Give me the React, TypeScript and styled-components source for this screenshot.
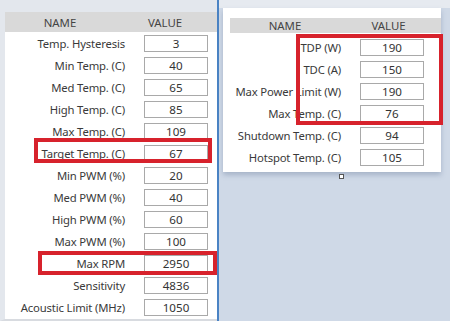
import React from 'react';
import styled, { createGlobalStyle } from 'styled-components';

const GlobalStyle = createGlobalStyle`
  html, body {
    margin: 0;
    padding: 0;
    background: #cfd9e7;
  }
  body {
    font-family: "Noto Sans", "Open Sans", sans-serif;
    color: #333;
  }
`;

const Screen = styled.div`
  position: relative;
  width: 450px;
  height: 321px;
  display: flex;
  overflow: hidden;
  background: #cfd9e7;
`;

const LeftPane = styled.div`
  width: 217px;
  flex-shrink: 0;
  background: #fff;
  border-left: 5px solid #e3e7ed;
  border-top: 12px solid #e3e7ed;
  border-bottom: 2px solid #d8dbe0;
  box-sizing: border-box;
  height: 321px;
  display: flex;
  flex-direction: column;
`;

const Divider = styled.div`
  width: 2px;
  flex-shrink: 0;
  background: #4a83c4;
`;

const RightPane = styled.div`
  flex: 1;
  border-top: 8px solid #e6eaf0;
  padding-left: 4px;
`;

const Card = styled.div`
  width: 218px;
  height: 164px;
  background: #fff;
  box-sizing: border-box;
  padding: 10px 0 0 7px;
  box-shadow: 0 3px 5px rgba(90, 110, 140, 0.35);
`;

const Header = styled.div<{ $nameWidth: number; $valueWidth: number; $height: number }>`
  display: grid;
  grid-template-columns: ${p => p.$nameWidth}px ${p => p.$valueWidth}px;
  height: ${p => p.$height}px;
  align-items: center;
  background: #d9d9d9;
  font-size: 11.4px;
  color: #444;
  text-align: center;
`;

const Rows = styled.div<{ $offset: number }>`
  display: flex;
  flex-direction: column;
  padding-top: ${p => p.$offset}px;
`;

const Row = styled.div<{ $labelWidth: number }>`
  display: grid;
  grid-template-columns: ${p => p.$labelWidth}px 64px;
  column-gap: 19px;
  height: 22px;
  align-items: center;
  font-size: 11.3px;
`;

const Label = styled.span`
  text-align: right;
  white-space: nowrap;
  letter-spacing: -0.15px;
  color: #3a3a3a;
`;

const ValueBox = styled.div`
  height: 17px;
  box-sizing: border-box;
  border: 1px solid #a9a9a9;
  background: #fff;
  text-align: center;
  line-height: 15px;
  font-size: 11.6px;
  color: #333;
`;

const Highlight = styled.div<{ $x: number; $y: number; $w: number; $h: number }>`
  position: absolute;
  left: ${p => p.$x}px;
  top: ${p => p.$y}px;
  width: ${p => p.$w}px;
  height: ${p => p.$h}px;
  box-sizing: border-box;
  border: 4px solid #d7222c;
  pointer-events: none;
`;

const Handle = styled.div`
  position: absolute;
  left: 339px;
  top: 174px;
  width: 5px;
  height: 5px;
  box-sizing: border-box;
  border: 1px solid #555;
  background: #fff;
`;

type Field = { name: string; value: number };

const fanFields: Field[] = [
  { name: 'Temp. Hysteresis', value: 3 },
  { name: 'Min Temp. (C)', value: 40 },
  { name: 'Med Temp. (C)', value: 65 },
  { name: 'High Temp. (C)', value: 85 },
  { name: 'Max Temp. (C)', value: 109 },
  { name: 'Target Temp. (C)', value: 67 },
  { name: 'Min PWM (%)', value: 20 },
  { name: 'Med PWM (%)', value: 40 },
  { name: 'High PWM (%)', value: 60 },
  { name: 'Max PWM (%)', value: 100 },
  { name: 'Max RPM', value: 2950 },
  { name: 'Sensitivity', value: 4836 },
  { name: 'Acoustic Limit (MHz)', value: 1050 },
];

const powerFields: Field[] = [
  { name: 'TDP (W)', value: 190 },
  { name: 'TDC (A)', value: 150 },
  { name: 'Max Power Limit (W)', value: 190 },
  { name: 'Max Temp. (C)', value: 76 },
  { name: 'Shutdown Temp. (C)', value: 94 },
  { name: 'Hotspot Temp. (C)', value: 105 },
];

function FieldTable(props: { fields: Field[]; labelWidth: number; offset: number }) {
  return (
    <Rows $offset={props.offset}>
      {props.fields.map(f => (
        <Row key={f.name} $labelWidth={props.labelWidth}>
          <Label>{f.name}</Label>
          <ValueBox>{f.value}</ValueBox>
        </Row>
      ))}
    </Rows>
  );
}

export default function App() {
  return (
    <Screen>
      <GlobalStyle />
      <LeftPane>
        <Header $nameWidth={110} $valueWidth={100} $height={20}>
          <span>NAME</span>
          <span>VALUE</span>
        </Header>
        <FieldTable fields={fanFields} labelWidth={120} offset={0} />
      </LeftPane>
      <Divider />
      <RightPane>
        <Card>
          <Header $nameWidth={110} $valueWidth={97} $height={15}>
            <span>NAME</span>
            <span>VALUE</span>
          </Header>
          <FieldTable fields={powerFields} labelWidth={111} offset={3} />
        </Card>
      </RightPane>

      <Highlight $x={34} $y={138} $w={178} $h={25} />
      <Highlight $x={38} $y={251} $w={179} $h={24} />
      <Highlight $x={296} $y={34} $w={147} $h={91} />
      <Handle />
    </Screen>
  );
}
